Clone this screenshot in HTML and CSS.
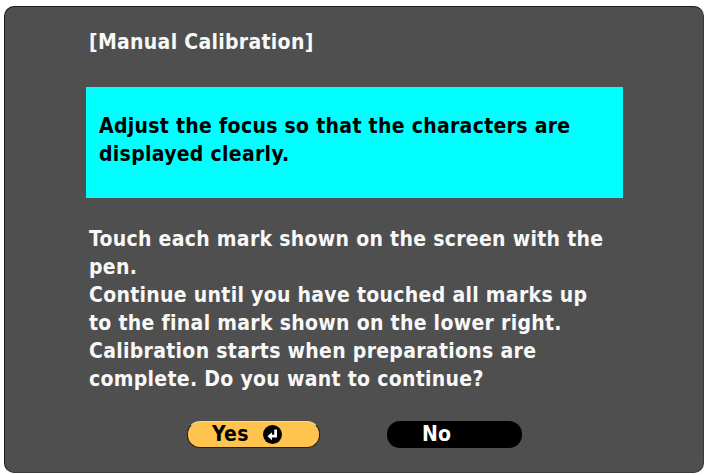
FILE: index.html
```html
<!DOCTYPE html>
<html>
<head>
<meta charset="utf-8">
<link rel="stylesheet" href="styles.css">
</head>
<body>
<div class="panel">
  <div class="title">[Manual Calibration]</div>
  <div class="notice">Adjust the focus so that the characters are<br>displayed clearly.</div>
  <div class="message">Touch each mark shown on the screen with the<br>pen.<br>Continue until you have touched all marks up<br>to the final mark shown on the lower right.<br>Calibration starts when preparations are<br>complete. Do you want to continue?</div>
  <div class="buttons">
    <div class="btn btn-yes"><span class="label">Yes</span>
      <svg class="enter" width="19" height="19" viewBox="0 0 17 17"><circle cx="8.5" cy="8.5" r="8.5" fill="#000"/><path d="M11.3 4 V10 H7" fill="none" stroke="#fff" stroke-width="2.4"/><path d="M8 6.4 L4 10 L8 13.6 Z" fill="#fff"/></svg>
    </div>
    <div class="btn btn-no"><span class="label">No</span></div>
  </div>
</div>
</body>
</html>
```
FILE: styles.css
```css
html, body {
  margin: 0;
  padding: 0;
  background: #ffffff;
}
body {
  width: 706px;
  height: 475px;
  font-family: "DejaVu Sans Condensed", "DejaVu Sans", "Liberation Sans", sans-serif;
  font-stretch: condensed;
  font-weight: bold;
  font-size: 21px;
  letter-spacing: 0.3px;
  line-height: 28px;
}
.panel {
  box-sizing: border-box;
  margin: 6px 0 0 4px;
  width: 700px;
  height: 467px;
  background: #4f4f4f;
  border-radius: 10px;
  border-top: 1px solid #1c1c1c;
  border-left: 1px solid #1c1c1c;
  border-right: 1px solid #3a3a3a;
  border-bottom: 1px solid #3a3a3a;
  padding: 21px 0 0 84px;
  color: #ffffff;
  display: flex;
  flex-direction: column;
  align-items: flex-start;
}
.title {
  color: #f8f8f8;
}
.notice {
  box-sizing: border-box;
  margin: 31px 0 0 -3px;
  width: 537px;
  height: 111px;
  background: #00ffff;
  color: #000000;
  padding: 25px 0 0 13px;
}
.message {
  margin-top: 27px;
  color: #f8f8f8;
}
.buttons {
  margin-top: 28px;
  margin-left: 98px;
  display: flex;
  gap: 67px;
}
.btn {
  box-sizing: border-box;
  height: 27px;
  border-radius: 13px;
  display: flex;
  align-items: center;
  line-height: 27px;
}
.btn-yes {
  width: 133px;
  background: #ffc44e;
  color: #000;
  border: 1px solid #2a1e00;
  border-top-color: #e8d9a8;
  padding-left: 24px;
}
.btn-yes .enter {
  margin-left: 14px;
}
.btn-no {
  width: 135px;
  background: #000000;
  color: #ffffff;
  padding-left: 35px;
}
```
